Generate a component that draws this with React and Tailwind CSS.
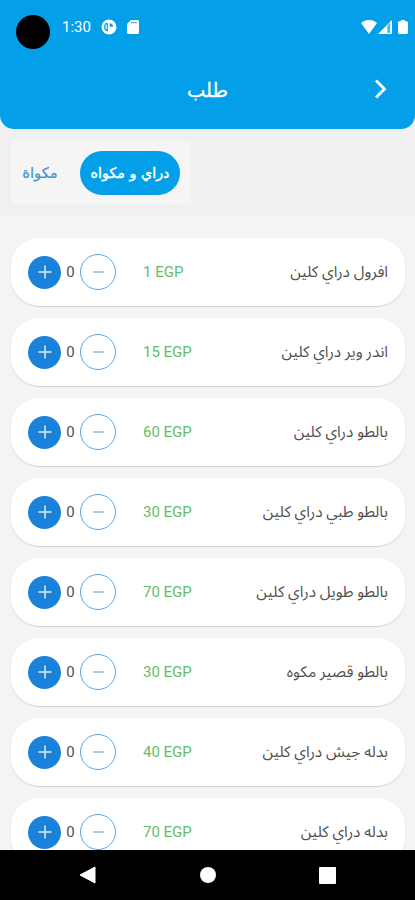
import { useState } from "react";

const services = [
  { name: "افرول دراي كلين", price: 1 },
  { name: "اندر وير دراي كلين", price: 15 },
  { name: "بالطو دراي كلين", price: 60 },
  { name: "بالطو طبي دراي كلين", price: 30 },
  { name: "بالطو طويل دراي كلين", price: 70 },
  { name: "بالطو قصير مكوه", price: 30 },
  { name: "بدله جيش دراي كلين", price: 40 },
  { name: "بدله دراي كلين", price: 70 },
];

const StatusBar = () => (
  <div className="flex h-[54px] items-start text-white">
    <div className="ml-4 mt-[15px] size-[34px] rounded-full bg-black" />
    <span className="ml-3 mt-[17px] w-[29px] text-[15px] leading-5">1:30</span>
    <svg className="ml-[10px] mt-[19px]" width="16" height="16" viewBox="0 0 16 16">
      <circle cx="8" cy="8" r="7.5" fill="white" />
      <path d="M6.3 4.2C2.8 5 2.8 11 6.3 11.8V4.2" fill="none" stroke="#039fe8" strokeWidth="1.2" />
      <path d="M8.7 4.2c1.8 0 3.3 1.4 3.5 3.6H8.7z" fill="#039fe8" />
    </svg>
    <svg className="ml-[10px] mt-5" width="12" height="14" viewBox="0 0 12 14">
      <path d="M4 0h7l1 1v12l-1 1H1l-1-1V4z" fill="white" />
      <path d="M4 2.6h5.6" stroke="#039fe8" strokeWidth="1.2" strokeDasharray="1.4 .7" />
    </svg>
    <svg className="ml-auto mt-5" width="16" height="14" viewBox="0 0 16 14">
      <path d="M0 3C4-.9 12-.9 16 3L8 14z" fill="white" />
    </svg>
    <svg className="ml-[1px] mt-5" width="14" height="14" viewBox="0 0 14 14">
      <path d="M14 0v14H0z" fill="white" />
      <path d="M9.8 6v6.5h2V3.5z" fill="#5cc2f1" stroke="#039fe8" strokeWidth=".6" />
    </svg>
    <svg className="ml-[6px] mr-[7px] mt-5" width="10" height="14" viewBox="0 0 10 14">
      <path d="M3 0h4v1.3h2l1 1V13l-1 1H1l-1-1V2.3l1-1h2z" fill="white" />
    </svg>
  </div>
);

const Header = () => (
  <header className="h-[129px] shrink-0 rounded-b-[14px] bg-[#039fe8]">
    <StatusBar />
    <div className="grid h-[72px] grid-cols-3 items-center text-white">
      <h1 dir="rtl" className="col-start-2 pt-[2px] text-center font-['DejaVu_Sans',sans-serif] text-[19.5px] [-webkit-text-stroke:0.3px_white]">
        طلب
      </h1>
      <button className="mr-[28px] mt-[-3px] justify-self-end">
        <svg width="13" height="20" viewBox="0 0 13 20" fill="none">
          <path d="M2 1.5 10.5 10 2 18.5" stroke="white" strokeWidth="2.8" />
        </svg>
      </button>
    </div>
  </header>
);

const ServiceCard = ({ name, price }) => {
  const [count, setCount] = useState(0);

  return (
    <li className="flex h-[68px] shrink-0 items-center rounded-[28px] bg-white pl-[17px] pr-[17px] shadow-[0_1px_1px_rgba(0,0,0,0.14)]">
      <button
        onClick={() => setCount(count + 1)}
        className="flex size-[33px] items-center justify-center rounded-full bg-[#1b82dc]"
      >
        <svg width="14" height="14" viewBox="0 0 14 14">
          <path d="M7 .5v13M.5 7h13" stroke="#dcecfb" strokeWidth="1.5" />
        </svg>
      </button>
      <span className="w-[19px] text-center text-[15px] text-[#505050]">{count}</span>
      <button
        onClick={() => setCount(Math.max(0, count - 1))}
        className="flex size-[36px] items-center justify-center rounded-full border border-[#58a3e6]"
      >
        <svg width="11" height="2" viewBox="0 0 11 2">
          <path d="M0 1h11" stroke="#82b9ea" strokeWidth="1.4" />
        </svg>
      </button>
      <span className="ml-[27px] text-[15px] text-[#67bb6a]">{price} EGP</span>
      <span dir="rtl" className="ml-auto whitespace-nowrap pt-[2px] text-[15.4px] text-[#505050]">{name}</span>
    </li>
  );
};

export default function App() {
  return (
    <div className="flex h-[900px] w-[415px] flex-col overflow-hidden bg-[#f4f4f4] font-['Roboto','Noto_Sans_Arabic',sans-serif]">
      <div className="shrink-0 bg-[#f0f0f0]">
        <Header />
        {/* Service tabs */}
        <div className="flex h-[87px] pl-[11px] pt-3">
          <div className="flex h-[63px] w-[180px] items-center bg-[#f5f5f5] font-['DejaVu_Sans',sans-serif]">
            <button
              dir="rtl"
              className="w-[69px] pr-[11px] pt-[2px] text-center text-[14.8px] text-[#4792cf] [-webkit-text-stroke:0.2px_#4792cf]"
            >
              مكواة
            </button>
            <button
              dir="rtl"
              className="h-[44px] w-[100px] whitespace-nowrap rounded-full bg-[#039fe8] pt-[2px] text-[14.3px] text-white [-webkit-text-stroke:0.4px_white]"
            >
              دراي و مكواه
            </button>
          </div>
        </div>
      </div>

      {/* Services list */}
      <ul className="flex min-h-0 flex-1 flex-col gap-3 overflow-hidden px-[11px] pr-[10px] pt-[22px]">
        {services.map((service) => (
          <ServiceCard key={service.name} {...service} />
        ))}
      </ul>

      {/* Android navigation */}
      <nav className="flex h-[50px] shrink-0 items-center bg-black">
        <svg className="ml-[79px]" width="17" height="18" viewBox="0 0 17 18">
          <path d="M16 1v16L1 9z" fill="white" stroke="white" strokeLinejoin="round" />
        </svg>
        <div className="ml-[104px] size-4 rounded-full bg-white" />
        <div className="ml-[103px] size-[17px] rounded-[1px] bg-white" />
      </nav>
    </div>
  );
}
